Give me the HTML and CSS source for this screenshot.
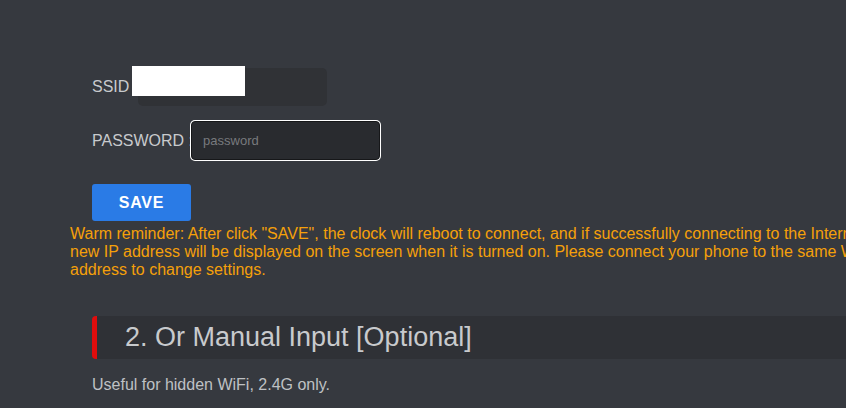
FILE: index.html
```html
<!DOCTYPE html>
<html>
<head>
    <title>WiFi Setup</title>
    <link rel="stylesheet" href="styles.css">
</head>
<body>

<div class="container">
    <form class="wifi-form">
        <div class="row">
            <label for="ssid">SSID :</label>
            <input type="text" id="ssid" class="field">
            <span class="mask"></span>
        </div>
        <div class="row">
            <label for="pwd">PASSWORD :</label>
            <input type="password" id="pwd" class="field focused" placeholder="password">
        </div>
        <button type="button" class="save-btn">SAVE</button>
    </form>

    <p class="tip">Warm reminder: After click "SAVE", the clock will reboot to connect, and if successfully connecting to the Internet, the<br>new IP address will be displayed on the screen when it is turned on. Please connect your phone to the same WiFi and visit the new IP<br>address to change settings.</p>

    <div class="section">
        <h3 class="section-title">2. Or Manual Input [Optional]</h3>
        <p class="note">Useful for hidden WiFi, 2.4G only.</p>
    </div>
</div>

</body>
</html>
```

FILE: styles.css
```css
body {
    font-family: 'Liberation Sans', Arial, sans-serif;
    font-size: 16px;
    background: #36393f;
    color: #c8cacd;
    margin: 0;
    padding: 0;
    overflow: hidden;
}
.container {
    padding: 68px 0 0 70px;
    width: 1100px;
}
.wifi-form {
    padding-left: 22px;
    display: flex;
    flex-direction: column;
    align-items: flex-start;
}
.row {
    position: relative;
    display: flex;
    align-items: center;
    margin-bottom: 15px;
}
label {
    white-space: pre;
}
.field {
    width: 189px;
    height: 38px;
    box-sizing: border-box;
    background: #303236;
    border: none;
    border-radius: 5px;
    padding: 0 11px;
    font-family: inherit;
    font-size: 13px;
    color: #ddd;
    outline: none;
}
.field::placeholder {
    color: #787a7e;
}
.focused {
    height: 39px;
    margin-left: -2px;
    background: #292b2f;
    border: 1px solid #161719;
    box-shadow: 0 0 0 1px #fff;
    border-radius: 4px;
}
.mask {
    position: absolute;
    left: 40px;
    top: -2px;
    width: 113px;
    height: 30px;
    background: #fff;
}
.save-btn {
    margin-top: 9px;
    width: 99px;
    height: 37px;
    background: #2a7be6;
    color: #fff;
    border: none;
    border-radius: 3px;
    font-family: inherit;
    font-size: 16px;
    font-weight: bold;
    letter-spacing: 0.8px;
    cursor: pointer;
}
.tip {
    color: #f5a00a;
    margin: 4px 0 0;
    white-space: nowrap;
}
.section {
    padding-left: 22px;
}
.section-title {
    margin: 37px 0 0;
    height: 43px;
    display: flex;
    align-items: center;
    background: #2f3136;
    border-left: 5px solid #e00d0d;
    border-radius: 4px 0 0 4px;
    padding-left: 28px;
    font-size: 27px;
    font-weight: normal;
    color: #c8cacd;
}
.note {
    margin: 17px 0 0;
    color: #bfc1c4;
}
```
